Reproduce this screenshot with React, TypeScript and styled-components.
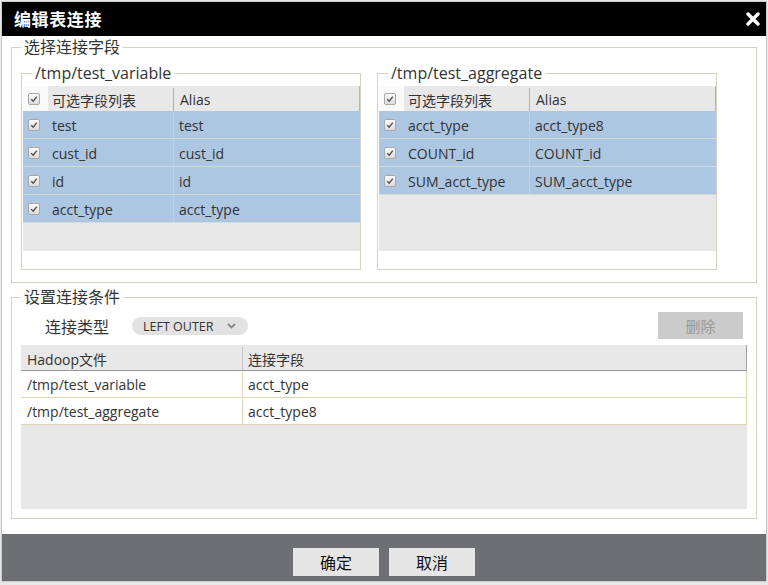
import React from 'react';
import styled, { createGlobalStyle } from 'styled-components';

const Global = createGlobalStyle`
  html, body { margin: 0; padding: 0; background: #e8e8e8; }
  body { font-family: "Open Sans", "Noto Sans CJK SC", sans-serif; color: #333; }
  * { box-sizing: border-box; }
`;

const Dialog = styled.div`
  margin: 1px 0 0 1px;
  width: 766px;
  height: 581px;
  border: 1px solid #c8c8c8;
  background: #fff;
  display: flex;
  flex-direction: column;
`;

const Header = styled.div`
  height: 34px;
  background: #000;
  display: flex;
  align-items: center;
  justify-content: space-between;
  padding: 0 6px 0 12px;
`;

const Title = styled.div`
  color: #fff;
  font-family: "Noto Sans CJK SC", sans-serif;
  font-weight: 700;
  font-size: 17px;
  letter-spacing: 0.6px;
  line-height: 20px;
`;

const CloseButton = styled.button`
  width: 14px;
  height: 14px;
  padding: 0;
  border: 0;
  background: transparent;
  display: flex;
  cursor: pointer;
`;

const Body = styled.div`
  flex: 1;
  padding: 0 9px;
`;

const Group = styled.fieldset<{ $top?: number; $bottom?: number }>`
  margin: ${p => p.$top ?? 0}px 0 0 0;
  padding: 0 9px ${p => p.$bottom ?? 12}px 9px;
  border: 1px solid #d3d3c3;
  min-width: 0;
`;

const GroupTitle = styled.legend`
  padding: 0 3px;
  font-size: 16px;
  line-height: 20px;
  color: #333;
`;

const SourceRow = styled.div`
  display: flex;
  gap: 16px;
  margin-top: 6px;
`;

const SubGroup = styled.fieldset`
  width: 340px;
  margin: 0;
  padding: 3px 0 18px 1px;
  border: 1px solid #d3d3c3;
  min-width: 0;
`;

const SubTitle = styled.legend`
  margin-left: 9px;
  padding: 0 3px;
  font-size: 16px;
  line-height: 20px;
  color: #333;
`;

const FieldTable = styled.div`
  width: 337px;
  height: 165px;
  background: #e8e8e8;
`;

const FieldRow = styled.div<{ $head?: boolean }>`
  display: grid;
  grid-template-columns: 25px 125px 1fr;
  height: ${p => (p.$head ? 25 : 28)}px;
  padding-top: ${p => (p.$head ? 2 : 1)}px;
  background: ${p => (p.$head ? '#e8e8e8' : '#adc6e2')};
  border-bottom: ${p => (p.$head ? '0' : '1px solid #d4dad4')};
  border-right: ${p => (p.$head ? '1px solid #b8b8b0' : '0')};
  font-size: 14px;
`;

const CheckCell = styled.div<{ $head?: boolean }>`
  display: flex;
  align-items: center;
  padding-left: 5px;
  margin-top: ${p => (p.$head ? -2 : -1)}px;
  background: ${p => (p.$head ? '#fafafa' : 'transparent')};
`;

const Cell = styled.div<{ $divider?: string; $pad?: number }>`
  display: flex;
  align-items: center;
  padding-left: ${p => p.$pad ?? 4}px;
  border-left: ${p => (p.$divider ? `1px solid ${p.$divider}` : '0')};
  white-space: nowrap;
  overflow: hidden;
`;

const Box = styled.span`
  width: 12px;
  height: 12px;
  border: 1px solid #a8a8a8;
  border-radius: 2px;
  background: linear-gradient(#fbfbfb, #dcdcdc);
  display: flex;
  align-items: center;
  justify-content: center;
`;

const Toolbar = styled.div`
  display: flex;
  align-items: center;
  height: 27px;
  margin-top: 5px;
`;

const Label = styled.span`
  margin-left: 24px;
  font-size: 16px;
  font-family: "Noto Sans CJK SC", sans-serif;
  color: #333;
`;

const Pill = styled.div`
  margin-left: 23px;
  margin-top: 1px;
  height: 18px;
  border-radius: 9px;
  background: #e2e2e2;
  display: flex;
  align-items: center;
  gap: 14px;
  padding: 0 12px 0 11px;
  font-size: 12.5px;
  color: #333;
`;

const DeleteButton = styled.button`
  margin-left: auto;
  margin-right: 4px;
  width: 85px;
  height: 27px;
  border: 0;
  background: #cbcbcb;
  color: #999;
  font-size: 15px;
  font-family: "Noto Sans CJK SC", sans-serif;
  padding: 0;
`;

const JoinTable = styled.div`
  margin-top: 6px;
  height: 164px;
  background: #e8e8e8;
`;

const JoinRow = styled.div<{ $head?: boolean }>`
  display: grid;
  grid-template-columns: 221px 1fr;
  height: ${p => (p.$head ? 26 : 27)}px;
  padding-top: ${p => (p.$head ? 2 : 1)}px;
  background: ${p => (p.$head ? '#e8e8e8' : '#fff')};
  border-bottom: 1px solid ${p => (p.$head ? '#999' : '#ded4b6')};
  border-right: 1px solid ${p => (p.$head ? '#a0a0a0' : '#ded4b6')};
  font-size: 14px;
`;

const Footer = styled.div`
  height: 47px;
  background: #6d6e72;
  display: flex;
  justify-content: center;
  align-items: flex-start;
  gap: 10px;
  padding-top: 14px;
`;

const FooterButton = styled.button`
  width: 86px;
  height: 28px;
  border: 0;
  background: #e5e5e5;
  color: #111;
  font-size: 16px;
  font-family: "Noto Sans CJK SC", sans-serif;
  padding: 0;
`;

const Check = () => (
  <Box>
    <svg width="8" height="8" viewBox="0 0 8 8">
      <path d="M1.2 4.2 L3.2 6.2 L6.8 1.6" fill="none" stroke="#555" strokeWidth="1.5" />
    </svg>
  </Box>
);

type Field = [string, string];

const FieldList = ({ rows }: { rows: Field[] }) => (
  <FieldTable>
    <FieldRow $head>
      <CheckCell $head><Check /></CheckCell>
      <Cell>可选字段列表</Cell>
      <Cell $divider="#b0b0b0" $pad={6}>Alias</Cell>
    </FieldRow>
    {rows.map(([name, alias]) => (
      <FieldRow key={name}>
        <CheckCell><Check /></CheckCell>
        <Cell>{name}</Cell>
        <Cell $divider="#d8cfae" $pad={5}>{alias}</Cell>
      </FieldRow>
    ))}
  </FieldTable>
);

const left: Field[] = [
  ['test', 'test'],
  ['cust_id', 'cust_id'],
  ['id', 'id'],
  ['acct_type', 'acct_type'],
];

const right: Field[] = [
  ['acct_type', 'acct_type8'],
  ['COUNT_id', 'COUNT_id'],
  ['SUM_acct_type', 'SUM_acct_type'],
];

const joins: Field[] = [
  ['/tmp/test_variable', 'acct_type'],
  ['/tmp/test_aggregate', 'acct_type8'],
];

export default function App() {
  return (
    <>
      <Global />
      <Dialog>
        <Header>
          <Title>编辑表连接</Title>
          <CloseButton aria-label="close">
            <svg width="14" height="14" viewBox="0 0 14 14">
              <path d="M2 2 L12 12 M12 2 L2 12" stroke="#fff" strokeWidth="3.4" strokeLinecap="round" />
            </svg>
          </CloseButton>
        </Header>
        <Body>
          <Group $top={1}>
            <GroupTitle>选择连接字段</GroupTitle>
            <SourceRow>
              <SubGroup>
                <SubTitle>/tmp/test_variable</SubTitle>
                <FieldList rows={left} />
              </SubGroup>
              <SubGroup>
                <SubTitle>/tmp/test_aggregate</SubTitle>
                <FieldList rows={right} />
              </SubGroup>
            </SourceRow>
          </Group>
          <Group $top={4} $bottom={9}>
            <GroupTitle>设置连接条件</GroupTitle>
            <Toolbar>
              <Label>连接类型</Label>
              <Pill>
                <span>LEFT OUTER</span>
                <svg width="9" height="6" viewBox="0 0 9 6">
                  <path d="M1 1 L4.5 4.5 L8 1" fill="none" stroke="#888" strokeWidth="1.8" />
                </svg>
              </Pill>
              <DeleteButton>删除</DeleteButton>
            </Toolbar>
            <JoinTable>
              <JoinRow $head>
                <Cell $pad={6}>Hadoop文件</Cell>
                <Cell $divider="#c8c8c8" $pad={5}>连接字段</Cell>
              </JoinRow>
              {joins.map(([file, field]) => (
                <JoinRow key={file}>
                  <Cell $pad={6}>{file}</Cell>
                  <Cell $divider="#ded4b6" $pad={5}>{field}</Cell>
                </JoinRow>
              ))}
            </JoinTable>
          </Group>
        </Body>
        <Footer>
          <FooterButton>确定</FooterButton>
          <FooterButton>取消</FooterButton>
        </Footer>
      </Dialog>
    </>
  );
}
